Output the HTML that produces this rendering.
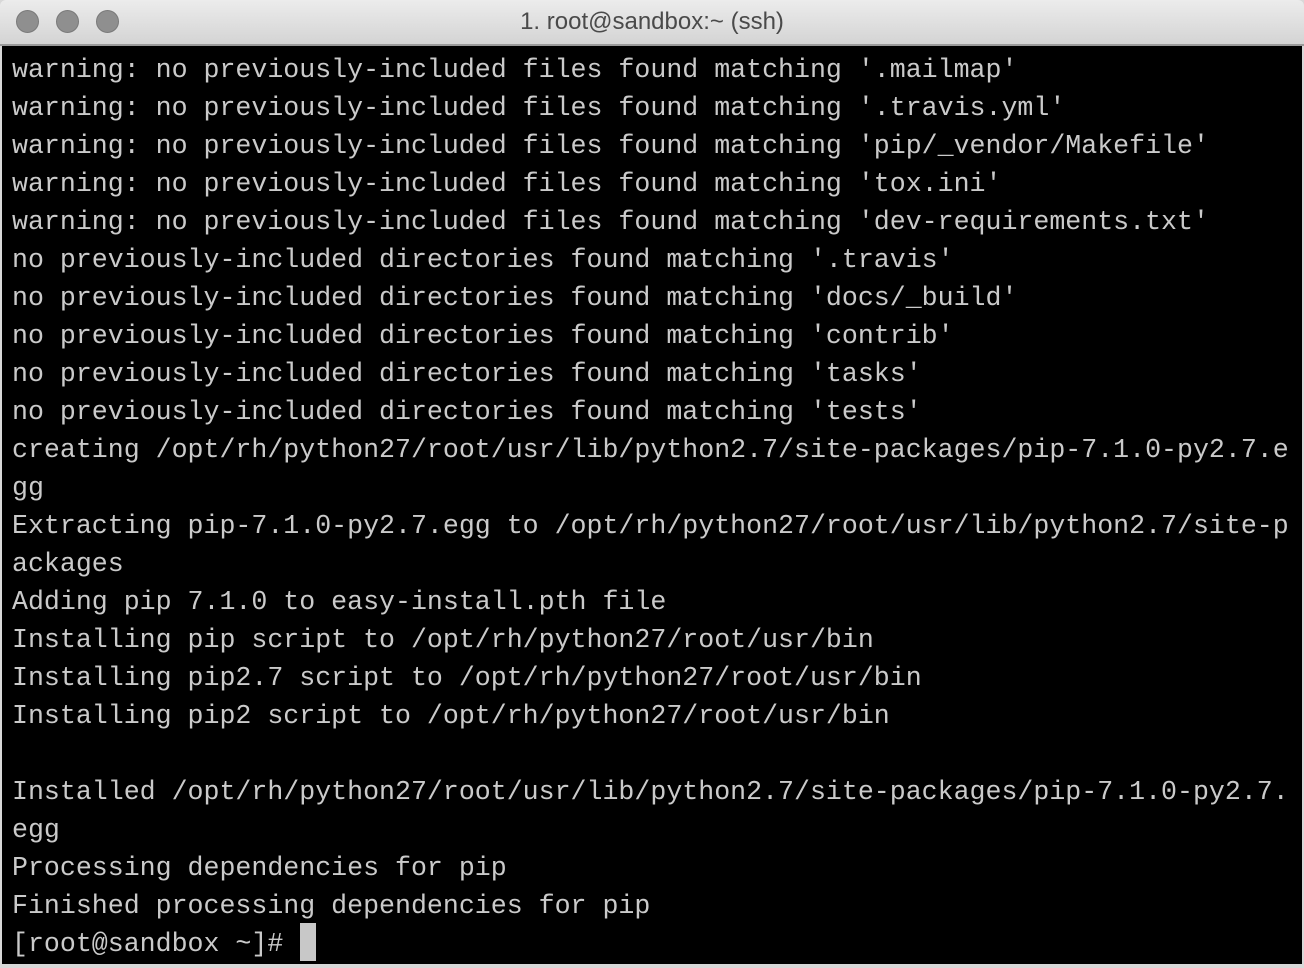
<!DOCTYPE html>
<html><head><style>
html,body{margin:0;padding:0;width:1304px;height:968px;overflow:hidden;background:#d8d8d8}
.title{position:absolute;left:0;top:0;width:1304px;height:44px;background:linear-gradient(#ececec,#d4d4d4);border-bottom:2px solid #9a9a9a;border-radius:6px 6px 0 0}
.title span{position:absolute;left:0;right:0;top:8px;text-align:center;font:24px "Liberation Sans",sans-serif;color:#4a4a4a}
.b{position:absolute;top:10px;width:23px;height:23px;border-radius:50%;background:#8f8f8f;border:1px solid #7a7a7a;box-sizing:border-box}
.term{position:absolute;left:2px;top:46px;width:1300px;height:918px;background:#000}
pre{position:absolute;left:10px;top:5px;margin:0;font-family:"Liberation Mono",monospace;font-size:26.6px;line-height:38px;color:#cacaca;letter-spacing:0}
.cur{position:absolute;left:298px;top:877px;width:16px;height:38px;background:#c8c8c8}
</style></head><body>
<div class="title"><div class="b" style="left:16px"></div><div class="b" style="left:56px"></div><div class="b" style="left:96px"></div><span>1. root@sandbox:~ (ssh)</span></div>
<div class="term"><pre>warning: no previously-included files found matching '.mailmap'
warning: no previously-included files found matching '.travis.yml'
warning: no previously-included files found matching 'pip/_vendor/Makefile'
warning: no previously-included files found matching 'tox.ini'
warning: no previously-included files found matching 'dev-requirements.txt'
no previously-included directories found matching '.travis'
no previously-included directories found matching 'docs/_build'
no previously-included directories found matching 'contrib'
no previously-included directories found matching 'tasks'
no previously-included directories found matching 'tests'
creating /opt/rh/python27/root/usr/lib/python2.7/site-packages/pip-7.1.0-py2.7.e
gg
Extracting pip-7.1.0-py2.7.egg to /opt/rh/python27/root/usr/lib/python2.7/site-p
ackages
Adding pip 7.1.0 to easy-install.pth file
Installing pip script to /opt/rh/python27/root/usr/bin
Installing pip2.7 script to /opt/rh/python27/root/usr/bin
Installing pip2 script to /opt/rh/python27/root/usr/bin

Installed /opt/rh/python27/root/usr/lib/python2.7/site-packages/pip-7.1.0-py2.7.
egg
Processing dependencies for pip
Finished processing dependencies for pip
[root@sandbox ~]# </pre><div class="cur"></div></div>
</body></html>
